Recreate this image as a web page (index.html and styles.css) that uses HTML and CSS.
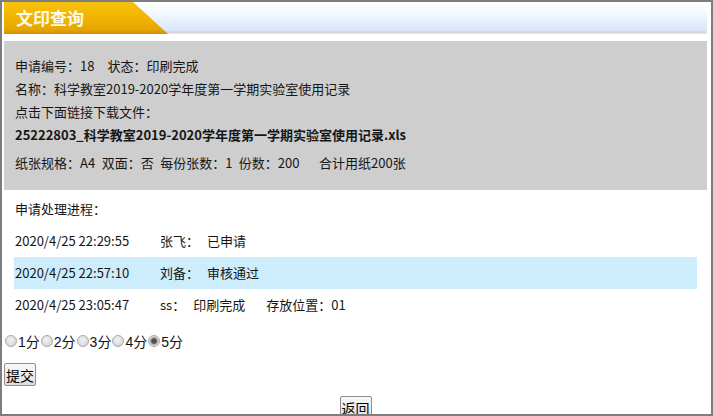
FILE: index.html
```html
<!DOCTYPE html>
<html lang="zh-CN">
<head>
<meta charset="utf-8">
<title>文印查询</title>
<link rel="stylesheet" href="styles.css">
</head>
<body>
<div class="frame">
  <div class="header"><div class="tab">文印查询</div></div>

  <div class="info">
    <p class="line">申请编号：18  状态：印刷完成</p>
    <p class="line">名称：科学教室2019-2020学年度第一学期实验室使用记录</p>
    <p class="line">点击下面链接下载文件：</p>
    <p class="line file">25222803_科学教室2019-2020学年度第一学期实验室使用记录.xls</p>
    <p class="line spec">纸张规格：A4 双面：否 每份张数：1 份数：200   合计用纸200张</p>
  </div>

  <p class="progress-title">申请处理进程：</p>
  <div class="steps">
    <div class="step"><span class="time">2020/4/25 22:29:55</span><span class="who">张飞：</span><span class="what">已申请</span></div>
    <div class="step hl"><span class="time">2020/4/25 22:57:10</span><span class="who">刘备：</span><span class="what">审核通过</span></div>
    <div class="step"><span class="time">2020/4/25 23:05:47</span><span class="who">ss：</span><span class="what">印刷完成</span><span class="where">存放位置：01</span></div>
  </div>

  <div class="rating"><label class="opt"><input type="radio" name="score" value="1">1分</label><label class="opt"><input type="radio" name="score" value="2">2分</label><label class="opt"><input type="radio" name="score" value="3">3分</label><label class="opt"><input type="radio" name="score" value="4">4分</label><label class="opt"><input type="radio" name="score" value="5" checked>5分</label></div>

  <div class="submit-row"><button class="btn" type="button">提交</button></div>
  <div class="back-row"><button class="btn" type="button">返回</button></div>
</div>
</body>
</html>
```

FILE: styles.css
```css
html, body {
  margin: 0;
  padding: 0;
  background: #ffffff;
}

.frame {
  width: 713px;
  height: 416px;
  box-sizing: border-box;
  border: 2px solid #7d7d7d;
  padding: 0 4px 0 2px;
  overflow: hidden;
  font-family: "Noto Sans CJK SC", "Liberation Sans", sans-serif;
  font-size: 13px;
  color: #161616;
}

.header {
  height: 32px;
  background: linear-gradient(to bottom, #ffffff 0%, #f4f8ff 35%, #e6effd 60%, #dbe7fb 88%, #cfd4dc 94%, #e6e6e6 100%);
}

.tab {
  width: 164px;
  height: 32px;
  box-sizing: border-box;
  padding-left: 12px;
  line-height: 32px;
  font-size: 17px;
  font-weight: bold;
  color: #fffbe8;
  background: linear-gradient(to bottom, #f7c20e 0%, #f1b500 45%, #e7a700 85%, #d08f00 100%);
  clip-path: polygon(0 0, 129px 0, 100% 100%, 0 100%);
}

.info {
  margin-top: 7px;
  height: 149px;
  box-sizing: border-box;
  padding: 13px 11px 0 11px;
  background: #cecece;
}

.line {
  margin: 0;
  line-height: 23px;
  white-space: pre;
  word-spacing: 3.6px;
}

.file {
  font-weight: bold;
}

.spec {
  margin-top: 5px;
}

.progress-title {
  margin: 7px 0 0 11px;
  line-height: 24px;
}

.steps {
  margin: 4px 10px 0 10px;
}

.step {
  height: 32px;
  line-height: 32px;
  padding-left: 1px;
  display: flex;
  white-space: nowrap;
}

.step.hl {
  background: #cdedfc;
}

.time {
  width: 145px;
  flex: none;
}

.who {
  margin-right: 8px;
}

.where {
  margin-left: 21px;
}

.rating {
  margin-top: 10px;
  height: 20px;
  display: flex;
  align-items: center;
  font-family: "Liberation Sans", "Noto Sans CJK SC", sans-serif;
  font-size: 14px;
  color: #111;
}

.opt {
  display: inline-flex;
  align-items: center;
}

.opt input {
  appearance: none;
  -webkit-appearance: none;
  width: 12px;
  height: 12px;
  margin: 0 1px 0 1px;
  border: 1px solid #a9a9a9;
  border-radius: 50%;
  box-sizing: border-box;
  background: radial-gradient(circle at 45% 40%, #f4f4f4 0%, #dedede 55%, #c6c6c6 100%);
}

.opt input:checked {
  background: radial-gradient(circle, #3f3f3f 0, #555 2px, #8d8d8d 3.2px, #d9d9d9 4.2px, #c9c9c9 100%);
}

.submit-row {
  margin-top: 12px;
  height: 23px;
}

.btn {
  height: 23px;
  padding: 0 1px;
  margin: 0;
  font-family: "Noto Sans CJK SC", sans-serif;
  font-size: 14px;
  line-height: 20px;
  color: #000;
  border: 1px solid #8e8e8e;
  border-radius: 2px;
  background: linear-gradient(to bottom, #f8f8f8 0%, #ececec 50%, #dddddd 100%);
}

.back-row {
  margin-top: 10px;
  text-align: center;
}
```
